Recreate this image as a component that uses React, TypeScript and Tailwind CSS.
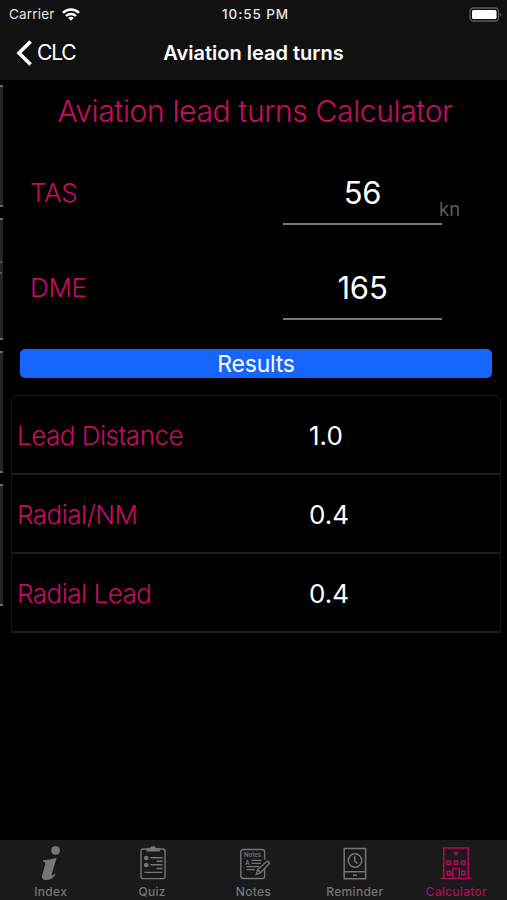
import React from 'react';

const peekPanels = [false, true, false, false];

const inputs = [
  { label: 'TAS', value: '56', unit: 'kn' },
  { label: 'DME', value: '165', unit: '' },
];

const results = [
  { label: 'Lead Distance', value: '1.0' },
  { label: 'Radial/NM', value: '0.4' },
  { label: 'Radial Lead', value: '0.4' },
];

const IndexIcon = () => (
  <svg width="36" height="36" viewBox="0 0 36 36" fill="currentColor">
    <circle cx="22.6" cy="5.4" r="4.4" />
    <path d="M10 15.2c4.4-.3 8.6-1 13.6-2.3l-4.8 16.2c-.5 1.9.9 1.9 2.9-.7l1 .8c-2.6 3.9-5.6 5.9-9.2 5.9-3.8 0-5.1-2-4.3-5.2l2.8-10c.6-2.1.1-3-2-3.1z" />
  </svg>
);

const QuizIcon = () => (
  <svg width="36" height="36" viewBox="0 0 36 36" fill="none" stroke="currentColor" strokeWidth="1.4">
    <rect x="7" y="4" width="24" height="29.6" rx="2" />
    <path d="M12.8 3.4H16c.4-2.4 5.2-2.4 5.6 0h4.2v2.7h-13z" fill="currentColor" strokeWidth="0.8" />
    <circle cx="12.3" cy="13" r="2.3" fill="currentColor" stroke="none" />
    <circle cx="12.3" cy="20" r="2.3" fill="currentColor" stroke="none" />
    <path d="M16.5 12.8h12M22.5 16.2h6M16.5 19.8h12M22.5 23.5h6M10.3 27.4h18" />
  </svg>
);

const NotesIcon = () => (
  <svg width="36" height="36" viewBox="0 0 36 36" fill="none" stroke="currentColor" strokeWidth="1.4">
    <path d="M29.6 14.5V6.7a2.2 2.2 0 0 0-2.2-2.2H8a2.2 2.2 0 0 0-2.2 2.2v24.6A2.2 2.2 0 0 0 8 33.5h19.4a2.2 2.2 0 0 0 2.2-2.2V24" />
    <text x="9" y="12.4" fontSize="6" fontWeight="600" fill="currentColor" stroke="none" textLength="17">Notes</text>
    <text x="10.3" y="19.6" fontSize="6" fontWeight="600" fill="currentColor" stroke="none">A</text>
    <path d="M16.5 15.4h10M16.5 18.4h9.5M11.5 21.6h12.5M11.5 24.6h8.5" />
    <path d="M21.3 29.4l1.4-4.8 9.2-8.3q1.6-.3 2.6 2L25.4 27.9zM22.7 24.6l2.7 3.3" />
  </svg>
);

const ReminderIcon = () => (
  <svg width="36" height="36" viewBox="0 0 36 36" fill="none" stroke="currentColor" strokeWidth="1.5">
    <path d="M7.2 3.4h21.4v30.4H7.2zM7.2 26.8h21.4" />
    <circle cx="18" cy="15.5" r="6.7" />
    <path d="M17.7 11.2V16l3 2.7M16 30.3h4" />
  </svg>
);

const CalculatorIcon = () => (
  <svg width="36" height="36" viewBox="0 0 36 36" fill="none" stroke="currentColor" strokeWidth="1.5">
    <path d="M5.8 33.5V3h24.4v30.5M2.5 33.5h31M14.8 33.5V23.8h6.4v9.7M18 5.8v5M15.5 8.3h5" />
    <path d="M9 16h3.4v3.2H9zM16.3 16h3.4v3.2h-3.4zM23.6 16H27v3.2h-3.4zM9 26.3h3.4v3.4H9zM23.6 26.3H27v3.4h-3.4z" />
  </svg>
);

const tabs = [
  { name: 'Index', icon: <IndexIcon /> },
  { name: 'Quiz', icon: <QuizIcon /> },
  { name: 'Notes', icon: <NotesIcon /> },
  { name: 'Reminder', icon: <ReminderIcon /> },
  { name: 'Calculator', icon: <CalculatorIcon /> },
];

const StatusBar = () => (
  <div className="grid h-[27px] grid-cols-3 items-center pl-[9px] pr-[5px] pt-px text-[13.5px] text-[#e4e4e4]">
    <div className="flex items-center gap-[7px]">
      <span className="tracking-[0.2px]">Carrier</span>
      <svg width="18" height="13" viewBox="0 0 18 13" fill="none" stroke="#fff" strokeWidth="2.4">
        <path d="M1 4.8a11.4 11.4 0 0 1 16 0M4 8a7.2 7.2 0 0 1 10 0" />
        <path d="M9 12.8L6.2 10a4 4 0 0 1 5.6 0z" fill="#fff" stroke="none" />
      </svg>
    </div>
    <span className="whitespace-nowrap text-center font-medium tracking-[0.9px]">10:55 PM</span>
    <svg className="justify-self-end" width="33" height="15" viewBox="0 0 33 15">
      <rect x="1" y="1" width="28.5" height="13" rx="3.5" fill="none" stroke="#5c5c5c" strokeWidth="1.3" />
      <rect x="3" y="3" width="24.5" height="9" rx="1.5" fill="#fff" />
      <path d="M31 5.3c1.6.8 1.6 3.6 0 4.4z" fill="#5c5c5c" />
    </svg>
  </div>
);

const NavBar = () => (
  <div className="grid h-[53px] grid-cols-[1fr_auto_1fr] items-center pb-[2px] text-white">
    <button className="flex items-center gap-[5px] pl-4 text-[21px] font-normal">
      <svg width="16" height="26" viewBox="0 0 16 26" fill="none" stroke="#fff" strokeWidth="3.6">
        <path d="M14.6 1.4L3 13l11.6 11.6" />
      </svg>
      <span className="tracking-[-1.2px]">CLC</span>
    </button>
    <h1 className="text-[20px] font-semibold">Aviation lead turns</h1>
    <span />
  </div>
);

// edge of the screen behind, visible along the left side
const PeekColumn = () => (
  <div className="flex w-[3px] shrink-0 flex-col gap-[11px] pt-[5px]">
    {peekPanels.map((split, i) => (
      <div key={i} className="h-[122px] border-y-2 border-[#6a6a6a] bg-[#262626]">
        {split && <div className="mt-[41px] h-[13px] w-[2px] border-y-2 border-[#555]" />}
      </div>
    ))}
  </div>
);

const App: React.FC = () => (
  <div className="flex h-[900px] w-[507px] flex-col overflow-hidden bg-black font-['Inter',sans-serif]">
    <header className="bg-[#111111]">
      <StatusBar />
      <NavBar />
    </header>

    <div className="flex flex-1">
      <PeekColumn />
      <main className="flex-1">
        <h2 className="flex h-16 items-center justify-center whitespace-nowrap pb-[2px] text-[30px] font-[350] tracking-[-0.35px] text-[#c80c66]">
          Aviation lead turns Calculator
        </h2>

        <div className="flex flex-col gap-[31px] pt-[17px]">
          {inputs.map((field) => (
            <div key={field.label} className="flex h-16 items-center pl-[27px]">
              <span className="w-[253px] pb-[2px] text-[26px] font-[350] tracking-[-0.3px] text-[#c80c66]">{field.label}</span>
              <div className="flex h-16 w-[159px] items-center justify-center border-b-2 border-[#787878] pt-[2px] text-[31px] tracking-[-0.2px] text-white">
                {field.value}
              </div>
              <span className="-ml-1 pl-px pt-[34px] text-[18.5px] text-[#5c5c5c]">{field.unit}</span>
            </div>
          ))}
        </div>

        <button className="ml-[17px] mt-[29px] flex h-[29px] w-[472px] items-center justify-center rounded-[5px] bg-[#1665ff] pt-px text-[23px] tracking-[-0.2px] text-white">
          Results
        </button>

        <div className="ml-2 mt-[17px] w-[490px] rounded-t-[5px] border-x border-t border-[#161616]">
          {results.map((row) => (
            <div key={row.label} className="flex h-[79px] items-center border-b-2 border-[#1c1c1c] pl-[5px] pt-[2px] text-[26px]">
              <span className="w-[292px] font-[350] tracking-[-0.5px] text-[#c80c66]">{row.label}</span>
              <span className="text-white">{row.value}</span>
            </div>
          ))}
        </div>
      </main>
    </div>

    <nav className="grid h-[60px] grid-cols-5 bg-[#1a1a1a]">
      {tabs.map((tab) => (
        <button
          key={tab.name}
          className={`flex flex-col items-center pt-[5px] ${tab.name === 'Calculator' ? 'text-[#b00c58]' : 'text-[#757575]'}`}
        >
          {tab.icon}
          <span className="mt-[3px] text-[12px] font-medium leading-[15px] tracking-[0.3px]">{tab.name}</span>
        </button>
      ))}
    </nav>
  </div>
);

export default App;
